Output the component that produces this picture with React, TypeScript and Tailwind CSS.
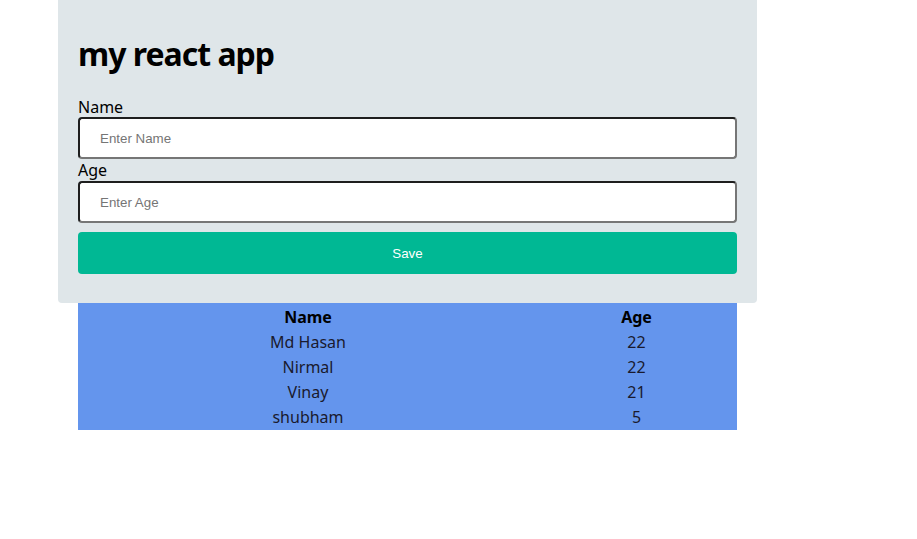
const people = [
  { name: "Md Hasan", age: 22 },
  { name: "Nirmal", age: 22 },
  { name: "Vinay", age: 21 },
  { name: "shubham", age: 5 },
]

export default function App() {
  return (
    <div className="min-h-[539px] w-full bg-white text-black [font-family:'Noto_Sans','Open_Sans',sans-serif]">
      <div className="ml-[58px] w-[699px]">
        {/* form card */}
        <div className="rounded-b bg-[#dfe6e9] px-5 pt-[33px] pb-[29px]">
          <h1 className="text-[32px] font-bold leading-[42px] tracking-[-1px] mb-[21px]">my react app</h1>
          <label className="block pt-px text-base leading-[20px]">Name</label>
          <input
            type="text"
            placeholder="Enter Name"
            className="block h-[42px] w-full rounded border-2 border-t-[#1e1e1e] border-l-[#1e1e1e] border-r-[#767676] border-b-[#767676] bg-white px-5 text-[13.33px] placeholder:text-[#757575] [font-family:Arial,'Liberation_Sans',sans-serif]"
          />
          <label className="block pt-px text-base leading-[21px]">Age</label>
          <input
            type="text"
            placeholder="Enter Age"
            className="block h-[42px] w-full rounded border-2 border-t-[#1e1e1e] border-l-[#1e1e1e] border-r-[#767676] border-b-[#767676] bg-white px-5 text-[13.33px] placeholder:text-[#757575] [font-family:Arial,'Liberation_Sans',sans-serif]"
          />
          <button className="mt-[9px] block h-[42px] w-full rounded bg-[#00b894] pt-px text-[13.33px] text-white [font-family:Arial,'Liberation_Sans',sans-serif]">
            Save
          </button>
        </div>

        {/* list */}
        <table className="mx-5 w-[659px] border-separate border-spacing-[2px] bg-[#6495ed] text-base">
          <thead>
            <tr>
              <th className="w-[456px] pt-[2px] pb-0 font-bold leading-[21px]">Name</th>
              <th className="pt-[2px] pb-0 font-bold leading-[21px]">Age</th>
            </tr>
          </thead>
          <tbody>
            {people.map((p) => (
              <tr key={p.name}>
                <td className="pt-[2px] pb-0 text-center leading-[21px] text-[#1a1a2e]">{p.name}</td>
                <td className="pt-[2px] pb-0 text-center leading-[21px] text-[#1a1a2e]">{p.age}</td>
              </tr>
            ))}
          </tbody>
        </table>
      </div>
    </div>
  )
}
